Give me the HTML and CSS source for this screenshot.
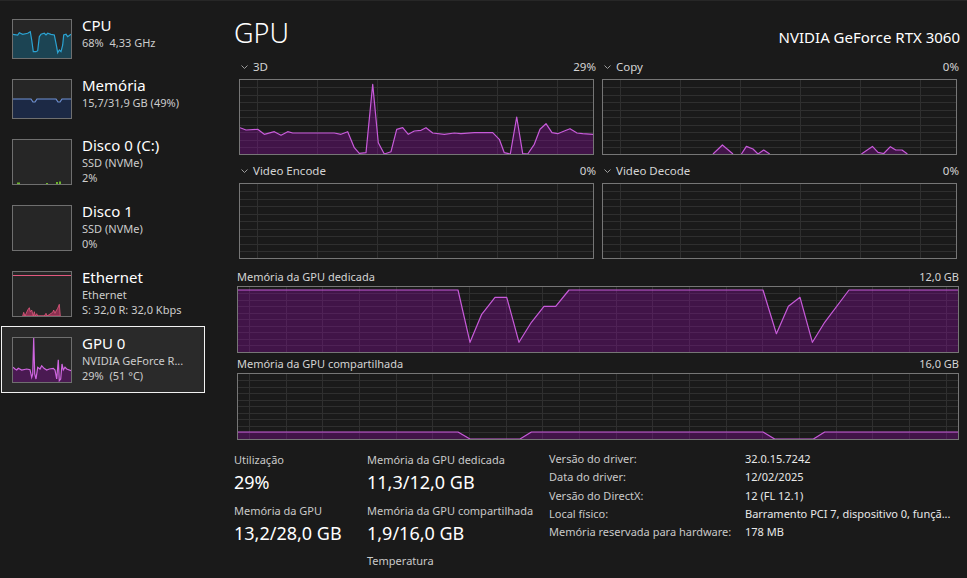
FILE: index.html
```html
<!DOCTYPE html>
<html lang="pt-BR">
<head>
<meta charset="utf-8">
<title>Gerenciador de Tarefas - GPU</title>
<link rel="stylesheet" href="styles.css">
</head>
<body>
<div class="app">
  <aside class="sidebar">
    <div class="item">
      <svg class="thumb" width="58" height="38" viewBox="0 0 58 38">
        <polygon class="cpu-fill" points="0,14.3 4.7,15 6.3,12.7 9.7,14.3 14.7,13.3 17.3,11.7 18.7,20 20.3,31.7 23,31.7 24.7,30.7 26.3,16.7 28,14.3 31.3,13.3 33,15 34.7,13.3 38,14.3 41.3,15 43,23.3 44.7,32.7 46.3,30 48,31.7 49.7,25 50.7,15 53,14.3 54.7,16.7 58,14.3 58,38 0,38"/>
        <polyline class="cpu-line" points="0,14.3 4.7,15 6.3,12.7 9.7,14.3 14.7,13.3 17.3,11.7 18.7,20 20.3,31.7 23,31.7 24.7,30.7 26.3,16.7 28,14.3 31.3,13.3 33,15 34.7,13.3 38,14.3 41.3,15 43,23.3 44.7,32.7 46.3,30 48,31.7 49.7,25 50.7,15 53,14.3 54.7,16.7 58,14.3"/>
      </svg>
      <div class="info">
        <div class="title">CPU</div>
        <div class="sub">68%&nbsp; 4,33 GHz</div>
      </div>
    </div>
    <div class="item">
      <svg class="thumb" width="58" height="38" viewBox="0 0 58 38">
        <polygon class="mem-fill" points="0,19 18,19 20,22 22,22 24,19 43,19 45,22 47,22 49,19 58,19 58,38 0,38"/>
        <polyline class="mem-line" points="0,19 18,19 20,22 22,22 24,19 43,19 45,22 47,22 49,19 58,19"/>
      </svg>
      <div class="info">
        <div class="title">Memória</div>
        <div class="sub">15,7/31,9 GB (49%)</div>
      </div>
    </div>
    <div class="item">
      <svg class="thumb" width="58" height="44" viewBox="0 0 58 44">
        <rect class="disk-mark" x="4" y="42.5" width="3" height="1.5"/>
        <rect class="disk-mark" x="33" y="43" width="2" height="1"/>
        <rect class="disk-mark" x="43" y="42" width="2" height="2"/>
        <rect class="disk-mark" x="46" y="41.5" width="2" height="2.5"/>
      </svg>
      <div class="info">
        <div class="title">Disco 0 (C:)</div>
        <div class="sub">SSD (NVMe)</div>
        <div class="sub">2%</div>
      </div>
    </div>
    <div class="item">
      <svg class="thumb" width="58" height="44" viewBox="0 0 58 44"></svg>
      <div class="info">
        <div class="title">Disco 1</div>
        <div class="sub">SSD (NVMe)</div>
        <div class="sub">0%</div>
      </div>
    </div>
    <div class="item">
      <svg class="thumb" width="58" height="44" viewBox="0 0 58 44">
        <line class="eth-line" x1="0" y1="3.5" x2="58" y2="3.5"/>
        <polygon class="eth-spikes" points="9.7,44 10.7,40.3 12,44 14.7,38 16.3,35.7 17.3,39.7 18.7,38 20.3,44 21.3,39.7 22.3,44 23.7,41.7 24.7,44 31.3,44 33,41.3 34,44 39.7,40.3 40.7,38 42,41.3 43,39 44.7,36.3 46.3,32.3 47.3,44"/>
      </svg>
      <div class="info">
        <div class="title">Ethernet</div>
        <div class="sub">Ethernet</div>
        <div class="sub">S: 32,0 R: 32,0 Kbps</div>
      </div>
    </div>
    <div class="item selected">
      <svg class="thumb" width="58" height="44" viewBox="0 0 58 44">
        <polygon class="gpu-fill" points="0,29.3 2,31 3.7,32 5.3,30.3 8.7,32 13.7,31 17,31.7 18.7,39.3 19.7,36 20.7,0 21.7,36 23,41 24.7,29.3 27,31 28.7,27.7 31,30.3 33.7,32 36.3,31 40.3,30.3 42,32 43.7,41 45.3,21.7 46.3,42.7 47.7,41 49,26 50.3,32 52,29.3 53.7,31 58,32.7 58,44 0,44"/>
        <polyline class="gpu-line" points="0,29.3 2,31 3.7,32 5.3,30.3 8.7,32 13.7,31 17,31.7 18.7,39.3 19.7,36 20.7,0 21.7,36 23,41 24.7,29.3 27,31 28.7,27.7 31,30.3 33.7,32 36.3,31 40.3,30.3 42,32 43.7,41 45.3,21.7 46.3,42.7 47.7,41 49,26 50.3,32 52,29.3 53.7,31 58,32.7"/>
      </svg>
      <div class="info">
        <div class="title">GPU 0</div>
        <div class="sub">NVIDIA GeForce R...</div>
        <div class="sub">29%&nbsp; (51 °C)</div>
      </div>
    </div>
  </aside>

  <main class="main">
    <header class="header">
      <h1 class="heading">GPU</h1>
      <div class="device">NVIDIA GeForce RTX 3060</div>
    </header>

    <section class="small-grid">
      <div class="cell">
        <div class="cell-label">
          <svg class="chev" width="7" height="4" viewBox="0 0 7 4"><path d="M0.5 0.5L3.5 3.5L6.5 0.5"/></svg>
          <span>3D</span><span class="pct">29%</span>
        </div>
        <svg class="graph" width="353" height="74" viewBox="0 0 353 74">
          <path class="grid" d="M0 7.5H353M0 15.5H353M0 22.5H353M0 30.5H353M0 37.5H353M0 45.5H353M0 52.5H353M0 60.5H353M0 67.5H353M17.5 0V74M77.5 0V74M137.5 0V74M197.5 0V74M257.5 0V74M317.5 0V74"/>
          <polygon class="area" points="0,47.7 6,50 17.7,49.3 24.3,54.3 34.3,51.7 41,55.3 47.7,51.7 52.7,53 94.3,53 101,54.3 107.7,51.7 114.3,67.7 119.3,73.3 126,72.7 132.7,4.3 138.3,62.7 144.3,74 151,71.7 156.7,49.3 162.7,47.7 168.3,54.3 174.3,51 181,50.3 186,47.7 192.7,53 204.3,54.3 214.3,53 221,53.7 234.3,52.7 252.7,52.7 259.3,59.3 264.3,72.7 270.3,74 276.7,37 282.7,73.7 287.7,74 294.3,64.3 300,49.3 306,43.7 312,52.7 317.7,53.7 324.3,51 330,48.7 337,53 342.7,53.7 353,54.3 353,74 0,74"/>
          <polyline class="line" points="0,47.7 6,50 17.7,49.3 24.3,54.3 34.3,51.7 41,55.3 47.7,51.7 52.7,53 94.3,53 101,54.3 107.7,51.7 114.3,67.7 119.3,73.3 126,72.7 132.7,4.3 138.3,62.7 144.3,74 151,71.7 156.7,49.3 162.7,47.7 168.3,54.3 174.3,51 181,50.3 186,47.7 192.7,53 204.3,54.3 214.3,53 221,53.7 234.3,52.7 252.7,52.7 259.3,59.3 264.3,72.7 270.3,74 276.7,37 282.7,73.7 287.7,74 294.3,64.3 300,49.3 306,43.7 312,52.7 317.7,53.7 324.3,51 330,48.7 337,53 342.7,53.7 353,54.3"/>
        </svg>
      </div>
      <div class="cell">
        <div class="cell-label">
          <svg class="chev" width="7" height="4" viewBox="0 0 7 4"><path d="M0.5 0.5L3.5 3.5L6.5 0.5"/></svg>
          <span>Copy</span><span class="pct">0%</span>
        </div>
        <svg class="graph" width="353" height="74" viewBox="0 0 353 74">
          <path class="grid" d="M0 7.5H353M0 15.5H353M0 22.5H353M0 30.5H353M0 37.5H353M0 45.5H353M0 52.5H353M0 60.5H353M0 67.5H353M17.5 0V74M77.5 0V74M137.5 0V74M197.5 0V74M257.5 0V74M317.5 0V74"/>
          <polygon class="area" points="110,74 119.4,65 130,74"/>
          <polygon class="area" points="138.4,74 143.4,66.4 150,69 155,74 160.7,70 166.7,74"/>
          <polygon class="area" points="258.4,74 269.4,66.4 275,72.3 280.7,73.5 287.4,66.7 292.7,70 299,70 304.4,74"/>
          <polyline class="line" points="110,74 119.4,65 130,74"/>
          <polyline class="line" points="138.4,74 143.4,66.4 150,69 155,74 160.7,70 166.7,74"/>
          <polyline class="line" points="258.4,74 269.4,66.4 275,72.3 280.7,73.5 287.4,66.7 292.7,70 299,70 304.4,74"/>
        </svg>
      </div>
      <div class="cell">
        <div class="cell-label">
          <svg class="chev" width="7" height="4" viewBox="0 0 7 4"><path d="M0.5 0.5L3.5 3.5L6.5 0.5"/></svg>
          <span>Video Encode</span><span class="pct">0%</span>
        </div>
        <svg class="graph" width="353" height="74" viewBox="0 0 353 74">
          <path class="grid" d="M0 7.5H353M0 15.5H353M0 22.5H353M0 30.5H353M0 37.5H353M0 45.5H353M0 52.5H353M0 60.5H353M0 67.5H353M17.5 0V74M77.5 0V74M137.5 0V74M197.5 0V74M257.5 0V74M317.5 0V74"/>
        </svg>
      </div>
      <div class="cell">
        <div class="cell-label">
          <svg class="chev" width="7" height="4" viewBox="0 0 7 4"><path d="M0.5 0.5L3.5 3.5L6.5 0.5"/></svg>
          <span>Video Decode</span><span class="pct">0%</span>
        </div>
        <svg class="graph" width="353" height="74" viewBox="0 0 353 74">
          <path class="grid" d="M0 7.5H353M0 15.5H353M0 22.5H353M0 30.5H353M0 37.5H353M0 45.5H353M0 52.5H353M0 60.5H353M0 67.5H353M17.5 0V74M77.5 0V74M137.5 0V74M197.5 0V74M257.5 0V74M317.5 0V74"/>
        </svg>
      </div>
    </section>

    <section class="full first">
      <div class="full-label"><span>Memória da GPU dedicada</span><span>12,0 GB</span></div>
      <svg class="graph" width="720" height="65" viewBox="0 0 720 65">
        <path class="grid" d="M0 6.5H720M0 13.5H720M0 19.5H720M0 26.5H720M0 32.5H720M0 39.5H720M0 45.5H720M0 52.5H720M0 58.5H720M11.5 0V65M48.5 0V65M84.5 0V65M121.5 0V65M158.5 0V65M194.5 0V65M231.5 0V65M268.5 0V65M304.5 0V65M341.5 0V65M378.5 0V65M414.5 0V65M451.5 0V65M488.5 0V65M524.5 0V65M561.5 0V65M598.5 0V65M634.5 0V65M671.5 0V65M708.5 0V65"/>
        <polygon class="area" points="0,3 220,3 232,55.3 243.7,27.3 257,10.3 268.7,10.3 281,55.3 293.4,35.3 306,19.3 317.7,19.3 331,3 525,3 538.4,46.7 550.4,19.3 562,10.3 574.4,55.3 586.7,35.3 611,3 720,3 720,65 0,65"/>
        <polyline class="line" points="0,3 220,3 232,55.3 243.7,27.3 257,10.3 268.7,10.3 281,55.3 293.4,35.3 306,19.3 317.7,19.3 331,3 525,3 538.4,46.7 550.4,19.3 562,10.3 574.4,55.3 586.7,35.3 611,3 720,3"/>
      </svg>
    </section>

    <section class="full second">
      <div class="full-label"><span>Memória da GPU compartilhada</span><span>16,0 GB</span></div>
      <svg class="graph" width="720" height="65" viewBox="0 0 720 65">
        <path class="grid" d="M0 6.5H720M0 13.5H720M0 19.5H720M0 26.5H720M0 32.5H720M0 39.5H720M0 45.5H720M0 52.5H720M0 58.5H720M11.5 0V65M48.5 0V65M84.5 0V65M121.5 0V65M158.5 0V65M194.5 0V65M231.5 0V65M268.5 0V65M304.5 0V65M341.5 0V65M378.5 0V65M414.5 0V65M451.5 0V65M488.5 0V65M524.5 0V65M561.5 0V65M598.5 0V65M634.5 0V65M671.5 0V65M708.5 0V65"/>
        <polygon class="area" points="0,58 220,58 232,65 282,65 293.4,58 525,58 536.7,65 575.4,65 586.7,58 720,58 720,65 0,65"/>
        <polyline class="line" points="0,58 220,58 232,65 282,65 293.4,58 525,58 536.7,65 575.4,65 586.7,58 720,58"/>
      </svg>
    </section>

    <section class="stats">
      <div class="stat-col col1">
        <div class="stat-label">Utilização</div>
        <div class="stat-value">29%</div>
        <div class="stat-label">Memória da GPU</div>
        <div class="stat-value">13,2/28,0 GB</div>
      </div>
      <div class="stat-col col2">
        <div class="stat-label">Memória da GPU dedicada</div>
        <div class="stat-value">11,3/12,0 GB</div>
        <div class="stat-label">Memória da GPU compartilhada</div>
        <div class="stat-value">1,9/16,0 GB</div>
        <div class="stat-label">Temperatura</div>
      </div>
      <dl class="kv">
        <dt>Versão do driver:</dt><dd>32.0.15.7242</dd>
        <dt>Data do driver:</dt><dd>12/02/2025</dd>
        <dt>Versão do DirectX:</dt><dd>12 (FL 12.1)</dd>
        <dt>Local físico:</dt><dd>Barramento PCI 7, dispositivo 0, funçã...</dd>
        <dt>Memória reservada para hardware:</dt><dd>178 MB</dd>
      </dl>
    </section>
  </main>
</div>
</body>
</html>
```

FILE: styles.css
```css
* { box-sizing: border-box; }

html, body {
  margin: 0;
  padding: 0;
  background: #1a1a1a;
}

body {
  color: #ffffff;
  font-family: "Noto Sans", "Open Sans", "DejaVu Sans", sans-serif;
  overflow: hidden;
}

.app {
  display: flex;
  height: 578px;
  border-top: 1px solid #272727;
}

/* ---------- sidebar ---------- */
.sidebar {
  width: 210px;
  flex: none;
  padding: 7px 0 0 1px;
}

.item {
  display: flex;
  gap: 10px;
  width: 204px;
  border: 1px solid transparent;
  padding: 10px 0 8px 10px;
}

.item.selected {
  background: #2a2a2a;
  border-color: #f2f2f2;
  padding-bottom: 9px;
}

.thumb {
  display: block;
  flex: none;
  border: 1px solid #6f6f6f;
  background: #262626;
  box-sizing: content-box;
}

.cpu-fill { fill: #1c4453; }
.cpu-line { fill: none; stroke: #2ba3d2; stroke-width: 1.2; }
.mem-fill { fill: #1c2945; }
.mem-line { fill: none; stroke: #6f91d6; stroke-width: 1.2; }
.disk-mark { fill: #6db52c; }
.eth-line { stroke: #e2587e; stroke-width: 1.2; }
.eth-spikes { fill: #8a3050; stroke: #e2587e; stroke-width: 0.8; }
.gpu-fill { fill: #4a1a52; }
.gpu-line { fill: none; stroke: #cf66e0; stroke-width: 1.2; }

.info {
  margin-top: -4px;
  min-width: 0;
}

.title {
  font-size: 15px;
  line-height: 20px;
  color: #ffffff;
  white-space: nowrap;
}

.sub {
  font-size: 11px;
  line-height: 15px;
  color: #cccccc;
  white-space: nowrap;
}

/* ---------- main ---------- */
.main {
  flex: 1;
  padding: 0 8px 0 27px;
  min-width: 0;
}

.header {
  display: flex;
  justify-content: space-between;
  align-items: baseline;
  height: 46px;
  padding-top: 18px;
  margin-bottom: 12px;
}

.heading {
  margin: 0 0 0 -3px;
  font-size: 27px;
  line-height: 28px;
  font-weight: 300;
  color: #ffffff;
}

.device {
  font-size: 15px;
  line-height: 28px;
  color: #ffffff;
  margin-right: -1px;
}

.small-grid {
  display: grid;
  grid-template-columns: 355px 355px;
  column-gap: 8px;
  row-gap: 8px;
  padding-left: 2px;
}

.cell-label {
  display: flex;
  align-items: center;
  height: 16px;
  margin-bottom: 4px;
  margin-right: -2px;
  font-size: 11.5px;
  line-height: 16px;
  color: #d4d4d4;
  white-space: nowrap;
}

.chev {
  display: block;
  flex: none;
  margin: 0 5px 0 2px;
}

.chev path {
  fill: none;
  stroke: #9c9c9c;
  stroke-width: 1;
}

.pct {
  margin-left: auto;
}

.graph {
  display: block;
  border: 1px solid #767676;
  box-sizing: content-box;
  background: #1a1a1a;
}

.grid {
  fill: none;
  stroke: #2f2f2f;
  stroke-width: 1;
  shape-rendering: crispEdges;
}

.area {
  fill: #960aaa;
  fill-opacity: 0.32;
}

.line {
  fill: none;
  stroke: #c75bd9;
  stroke-width: 1.2;
  stroke-linejoin: round;
}

.full.first { margin-top: 10px; }
.full.second { margin-top: 3px; }

.full-label {
  display: flex;
  justify-content: space-between;
  height: 16px;
  margin-bottom: 1px;
  font-size: 11px;
  line-height: 16px;
  color: #d4d4d4;
}

/* ---------- stats ---------- */
.stats {
  display: flex;
  align-items: flex-start;
  margin: 12px 0 0 -3px;
}

.stat-col { flex: none; }
.col1 { width: 133px; }
.col2 { width: 182px; }

.stat-label {
  font-size: 11px;
  line-height: 16px;
  color: #c9c9c9;
  white-space: nowrap;
}

.stat-value {
  font-size: 18px;
  line-height: 24px;
  margin: 2px 0 8.5px;
  color: #ffffff;
  white-space: nowrap;
}

.kv {
  display: grid;
  grid-template-columns: 196px auto;
  align-content: start;
  margin: -2px 0 0;
  font-size: 11px;
  line-height: 18.3px;
}

.kv dt {
  color: #c9c9c9;
  white-space: nowrap;
}

.kv dd {
  margin: 0;
  color: #e8e8e8;
  white-space: nowrap;
}
```
